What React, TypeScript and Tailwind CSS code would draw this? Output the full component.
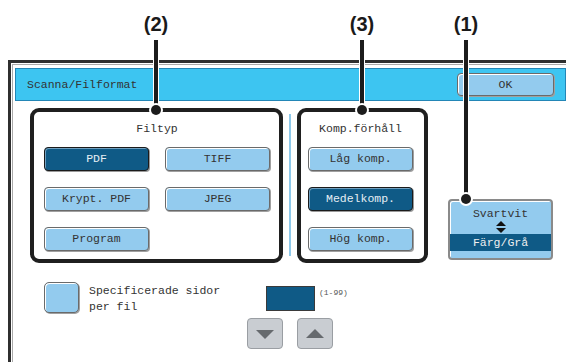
import React from "react";

const mono = { fontFamily: '"Liberation Mono", "DejaVu Sans Mono", monospace' };

function Btn({ label, selected = false }: { label: string; selected?: boolean }) {
  return (
    <div
      className={
        "flex h-[24px] w-[105px] items-center justify-center rounded-[4px] border text-[11.5px] leading-none " +
        (selected
          ? "border-[#1b1b1b] bg-[#0f5a86] text-[#e6eef4] shadow-[inset_1px_1px_0_#6f9fbf,1px_1px_0_#9a9a9a]"
          : "border-[#6a6a6a] bg-[#93cbee] text-[#333] shadow-[inset_1px_1px_0_#ffffff,1px_1px_0_#a0a0a0]")
      }
    >
      {label}
    </div>
  );
}

function Leader({ x, top, bottom, label }: { x: number; top: number; bottom: number; label: string }) {
  return (
    <>
      <div
        className="absolute text-[20px] font-bold leading-none text-[#1a1a1a]"
        style={{ left: x - 20, width: 40, top: 14, textAlign: "center", fontFamily: '"Liberation Sans", Arial, sans-serif' }}
      >
        {label}
      </div>
      <div
        className="absolute w-[4px] bg-[#1c1c1c] shadow-[0_0_0_1px_#ffffff]"
        style={{ left: x - 2, top, height: bottom - top }}
      />
      <div
        className="absolute h-[10px] w-[10px] rounded-full bg-[#1c1c1c] shadow-[0_0_0_2px_#ffffff]"
        style={{ left: x - 5, top: bottom - 5 }}
      />
    </>
  );
}

export default function App() {
  return (
    <div className="relative h-[362px] w-[566px] overflow-hidden bg-white" style={mono}>
      {/* Outer frame */}
      <div className="ml-[8px] mt-[60px] h-[302px] border-l-[3px] border-t-[3px] border-[#2f2f2f]">
        <div className="ml-[1px] mt-[1px] h-full border-l border-t border-[#aaaaaa] pl-[2px] pt-[3px]">
          {/* Title bar */}
          <div className="flex h-[33px] items-center justify-between border border-[#2386b6] bg-[#3dc5f1] pl-[11px] pr-[11px]">
            <span className="text-[11.5px] text-[#333]">Scanna/Filformat</span>
            <div className="flex h-[23px] w-[97px] items-center justify-center rounded-[4px] border border-[#6a6a6a] bg-[#93cbee] text-[11.5px] text-[#333] shadow-[inset_1px_1px_0_#ffffff,1px_1px_0_#a0a0a0]">
              OK
            </div>
          </div>

          {/* Groups row */}
          <div className="ml-[15px] mt-[7px] flex">
            {/* Filtyp */}
            <div className="h-[155px] w-[253px] rounded-[9px] border-[4px] border-[#1f1f1f] pl-[10px] pt-[9px]">
              <div className="w-[226px] text-center text-[11.5px] leading-[16px] text-[#333]">Filtyp</div>
              <div className="mt-[10px] grid w-[226px] grid-cols-[105px_105px] gap-x-[16px] gap-y-[16px]">
                <Btn label="PDF" selected />
                <Btn label="TIFF" />
                <Btn label="Krypt. PDF" />
                <Btn label="JPEG" />
                <Btn label="Program" />
              </div>
            </div>

            {/* separator */}
            <div className="ml-[6px] mt-[6px] h-[142px] w-[2px] bg-[#8fc9ea]" />

            {/* Komp.förhåll */}
            <div className="ml-[6px] h-[155px] w-[131px] rounded-[9px] border-[4px] border-[#1f1f1f] pl-[7px] pt-[9px]">
              <div className="w-[105px] text-center text-[11.5px] leading-[16px] text-[#333]">Komp.förhåll</div>
              <div className="mt-[10px] flex flex-col gap-[16px]">
                <Btn label="Låg komp." />
                <Btn label="Medelkomp." selected />
                <Btn label="Hög komp." />
              </div>
            </div>

            {/* Svartvit / Färg */}
            <div className="mb-[3px] ml-[20px] flex h-[61px] w-[105px] flex-col self-end overflow-hidden rounded-[4px] border-2 border-[#8a8a8a] bg-[#93cbee] shadow-[inset_1px_1px_0_#ffffff]">
              <div className="pt-[6px] text-center text-[11.5px] leading-[13px] text-[#333]">Svartvit</div>
              <div className="flex justify-center pt-[1px]">
                <svg width="12" height="12" viewBox="0 0 12 12">
                  <polygon points="6,0 11,5 1,5" fill="#111" />
                  <polygon points="1,7 11,7 6,12" fill="#111" />
                </svg>
              </div>
              <div className="mt-[1px] flex h-[17px] items-center justify-center bg-[#0f5a86] text-[11.5px] text-[#f0f0f0]">
                Färg/Grå
              </div>
            </div>
          </div>

          {/* Bottom row */}
          <div className="ml-[29px] mt-[19px] flex items-start">
            <div className="h-[31px] w-[35px] rounded-[5px] border border-[#6a6a6a] bg-[#93cbee] shadow-[inset_1px_1px_0_#ffffff,1px_1px_0_#a0a0a0]" />
            <div className="ml-[10px] w-[158px] pt-[1px] text-[11.5px] leading-[16px] text-[#333]">
              Specificerade sidor
              <br />
              per fil
            </div>
            <div className="mt-[4px] flex flex-col">
              <div className="ml-[19px] flex items-start">
                <div className="h-[25px] w-[49px] border border-[#3a3a3a] bg-[#0f5a86]" />
                <span className="ml-[4px] mt-[3px] text-[8px] leading-none text-[#555]">(1-99)</span>
              </div>
              <div className="mt-[7px] flex gap-[14px]">
                <div className="flex h-[31px] w-[36px] items-center justify-center rounded-[4px] border border-[#9a9ea3] bg-[#c9cdd2]">
                  <svg width="18" height="10" viewBox="0 0 18 10">
                    <polygon points="0,1 18,1 9,10" fill="#666a6e" />
                  </svg>
                </div>
                <div className="flex h-[31px] w-[36px] items-center justify-center rounded-[4px] border border-[#9a9ea3] bg-[#c9cdd2]">
                  <svg width="18" height="10" viewBox="0 0 18 10">
                    <polygon points="9,0 18,9 0,9" fill="#666a6e" />
                  </svg>
                </div>
              </div>
            </div>
          </div>
        </div>
      </div>

      {/* Callout annotations */}
      <Leader x={156} top={40} bottom={110} label="(2)" />
      <Leader x={362} top={40} bottom={110} label="(3)" />
      <Leader x={466} top={40} bottom={199} label="(1)" />
    </div>
  );
}
